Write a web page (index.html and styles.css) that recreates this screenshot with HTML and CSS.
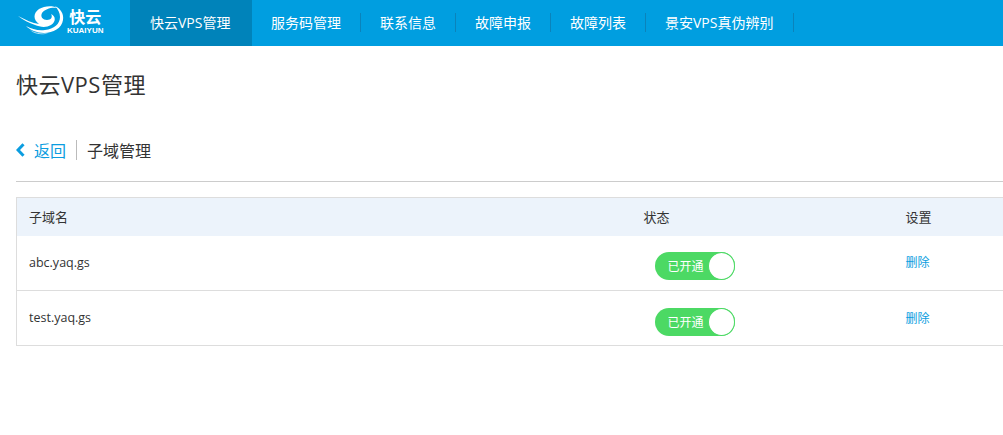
FILE: index.html
```html
<!DOCTYPE html>
<html lang="en">
<head>
    <meta charset="UTF-8">
    <title>快云VPS管理</title>
    <link rel="stylesheet" href="styles.css">
</head>
<body>
    <header class="topbar">
        <a class="logo" href="#">
            <svg class="logo-mark" viewBox="0 0 46 30" width="46" height="30">
                <path fill="#fff" d="M0 11C8 15 14 18 21 19C15 15 15 8 21 4C26 1 34 0 40 3C33 2 27 4 24 8C22 12 25 15 29 15C33 15 35 12 33 9C38 11 38 17 33 20C28 23 22 22 17 20C11 18 5 15 0 11Z"/>
                <path fill="#fff" d="M37 1C43 4 46 9 45 15C44 23 35 28 26 28C19 28 12 25 8 21C14 24 20 26 27 25C36 24 42 19 42 12C42 8 40 4 37 1Z"/>
                <path fill="#fff" opacity="0.7" d="M12 25C17 28 24 29 30 28C26 30 17 30 12 25Z"/>
            </svg>
            <span class="logo-text">
                <span class="logo-cn">快云</span>
                <span class="logo-en">KUAIYUN</span>
            </span>
        </a>
        <nav class="nav">
            <a class="nav-item active" href="#">快云VPS管理</a>
            <a class="nav-item" href="#">服务码管理</a>
            <a class="nav-item" href="#">联系信息</a>
            <a class="nav-item" href="#">故障申报</a>
            <a class="nav-item" href="#">故障列表</a>
            <a class="nav-item" href="#">景安VPS真伪辨别</a>
        </nav>
    </header>

    <main class="main">
        <h1 class="page-title">快云VPS管理</h1>

        <div class="crumbs">
            <a class="back" href="#">
                <svg class="back-icon" viewBox="0 0 9 14" width="9" height="14">
                    <path d="M7.5 1.2L2 7l5.5 5.8" fill="none" stroke="#0b9de0" stroke-width="3"/>
                </svg>
                返回
            </a>
            <span class="crumb-current">子域管理</span>
        </div>

        <table class="domains">
            <thead>
                <tr>
                    <th class="col-name">子域名</th>
                    <th class="col-state">状态</th>
                    <th>设置</th>
                </tr>
            </thead>
            <tbody>
                <tr>
                    <td>abc.yaq.gs</td>
                    <td><span class="switch">已开通<i class="knob"></i></span></td>
                    <td><a class="del" href="#">删除</a></td>
                </tr>
                <tr>
                    <td>test.yaq.gs</td>
                    <td><span class="switch">已开通<i class="knob"></i></span></td>
                    <td><a class="del" href="#">删除</a></td>
                </tr>
            </tbody>
        </table>
    </main>
</body>
</html>
```

FILE: styles.css
```css
* {
    margin: 0;
    padding: 0;
    box-sizing: border-box;
}

html, body {
    overflow: hidden;
}

body {
    height: 435px;
    background: #fff;
    color: #333;
    font-family: "Open Sans", "Noto Sans CJK SC", sans-serif;
}

a {
    text-decoration: none;
}

.topbar {
    display: flex;
    height: 46px;
    background: #009ee0;
}

.logo {
    display: flex;
    width: 130px;
    padding: 5px 0 0 18px;
    color: #fff;
}

.logo-mark {
    flex: none;
}

.logo-text {
    display: flex;
    flex-direction: column;
    align-items: center;
    margin: 4px 0 0 3px;
}

.logo-cn {
    font-size: 16px;
    line-height: 17px;
    font-weight: 700;
}

.logo-en {
    font-family: "Liberation Sans", sans-serif;
    font-size: 8px;
    line-height: 9px;
    font-weight: 700;
}

.nav {
    display: flex;
}

.nav-item {
    position: relative;
    display: block;
    padding: 0 20px 0 19px;
    color: #fff;
    font-size: 14px;
    line-height: 46px;
}

.nav-item:not(.active)::after {
    content: "";
    position: absolute;
    top: 13px;
    right: 0;
    width: 1px;
    height: 19px;
    background: #0a83bb;
}

.nav-item.active {
    width: 122px;
    padding: 0 20px;
    background: #0083ba;
}

.nav-item:last-child {
    padding-right: 21px;
}

.main {
    padding-left: 16px;
}

.page-title {
    padding-top: 23px;
    font-size: 22px;
    line-height: 30px;
    font-weight: 400;
    letter-spacing: 0.5px;
}

.crumbs {
    display: flex;
    align-items: center;
    height: 83px;
    margin-bottom: 15px;
    padding-top: 20px;
    border-bottom: 1px solid #ccc;
    font-size: 16px;
}

.back {
    display: flex;
    align-items: center;
    gap: 9px;
    height: 20px;
    padding-right: 10px;
    border-right: 1px solid #bbb;
    color: #0b9de0;
}

.crumb-current {
    padding-left: 10px;
}

.domains {
    width: 987px;
    table-layout: fixed;
    border-collapse: collapse;
    border: 1px solid #ddd;
    border-right: 0;
    font-size: 12.5px;
}

.domains th {
    height: 38px;
    padding-left: 12px;
    background: #ecf3fb;
    font-size: 13px;
    font-weight: 400;
    text-align: left;
}

.domains td {
    height: 55px;
    padding: 0 0 1px 12px;
}

.domains tr + tr td {
    border-top: 1px solid #ddd;
}

.col-name {
    width: 615px;
}

.col-state {
    width: 262px;
}

.switch {
    display: flex;
    align-items: center;
    justify-content: space-between;
    width: 80px;
    height: 28px;
    margin: 8px 0 0 11px;
    padding-left: 13px;
    border-radius: 14px;
    background: #4cd964;
    color: #fff;
    font-size: 12px;
}

.knob {
    width: 27px;
    height: 28px;
    border: 1px solid #4cd964;
    border-radius: 50%;
    background: #fff;
}

.del {
    color: #0b9de0;
    font-size: 12px;
}
```
